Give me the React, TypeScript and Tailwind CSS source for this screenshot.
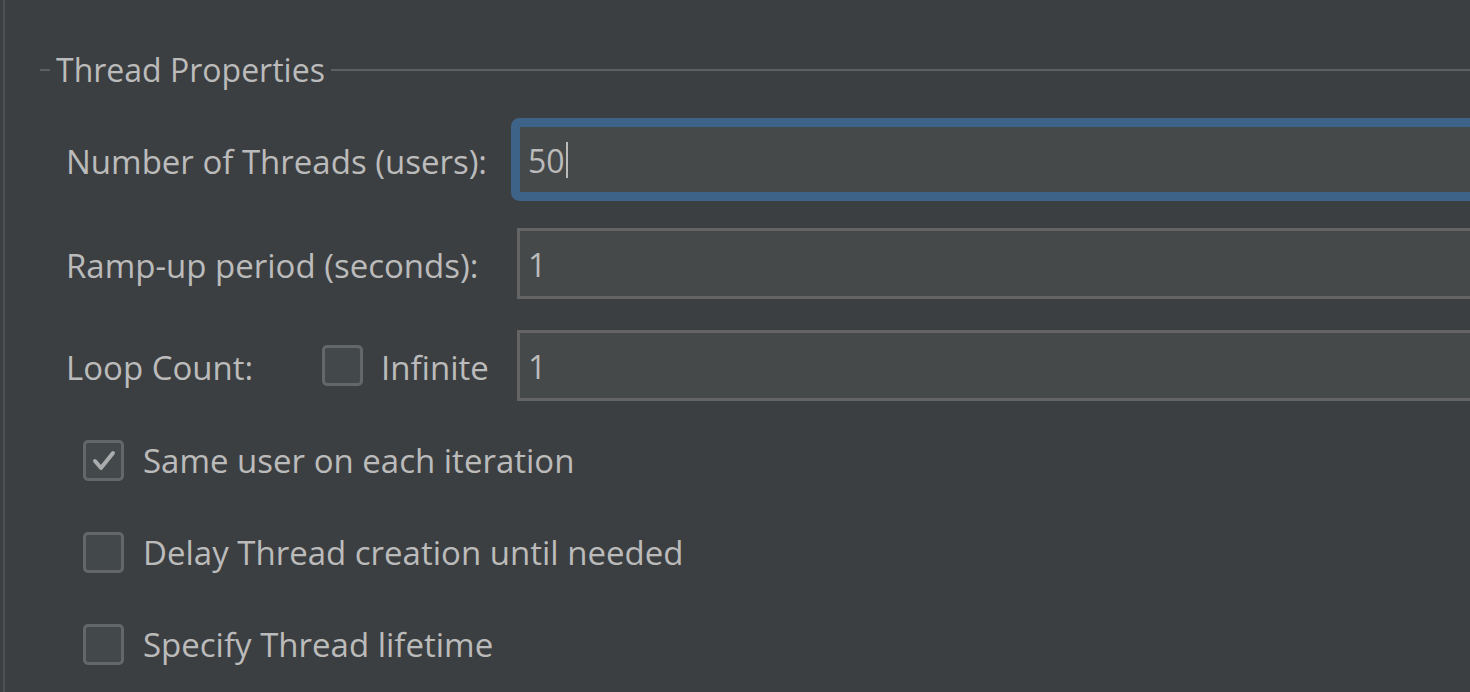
import React from "react";

const font = { fontFamily: '"Open Sans", "Noto Sans", sans-serif' };

function Box({ checked }: { checked?: boolean }) {
  return (
    <div className="w-[41px] h-[41px] shrink-0 rounded-[5px] border-[3px] border-[#646768] bg-[#43494a] flex items-center justify-center">
      {checked && (
        <svg width="26" height="24" viewBox="0 0 26 24">
          <path d="M4 12 L10 19 L22 4" fill="none" stroke="#a9abad" strokeWidth="4" strokeLinecap="round" strokeLinejoin="round" />
        </svg>
      )}
    </div>
  );
}

function Field({ value, focused }: { value: string; focused?: boolean }) {
  return (
    <div
      className={
        "flex-1 -mr-[30px] h-[71px] flex items-center pl-[8px] bg-[#45494a] border-[3px] " +
        (focused
          ? "border-[#3d6388] rounded-[3px] shadow-[0_0_0_6px_#3d6388]"
          : "border-[#646464]")
      }
    >
      <span className="text-[32px] text-[#bbbbbb] leading-none pt-[3px]">{value}</span>
      {focused && <span className="ml-[1px] w-[2px] h-[36px] bg-[#bbbbbb]" />}
    </div>
  );
}

export default function App() {
  return (
    <div className="w-[1470px] h-[692px] overflow-hidden bg-[#3c3f41] pl-[3px]" style={font}>
      <div className="h-full border-l-[2px] border-[#4e5153] text-[#bbbbbb] text-[33px]">
        <div className="h-[140px] pt-[50px]">
          <div className="h-[40px] flex items-center">
            <div className="ml-[35px] w-[10px] h-[2px] bg-[#5d6062]" />
            <span className="ml-[6px] leading-none text-[32px]">Thread Properties</span>
            <div className="ml-[6px] flex-1 h-[2px] bg-[#5d6062]" />
          </div>
        </div>
        <div className="flex flex-col pl-[61px]">
          <div className="h-[71px] mt-[-16px] flex items-center">
            <span className="w-[451px] shrink-0 leading-none pt-[4px]">Number of Threads (users):</span>
            <Field value="50" focused />
          </div>
          <div className="h-[71px] mt-[33px] flex items-center">
            <span className="w-[451px] shrink-0 leading-none pt-[4px]">Ramp-up period (seconds):</span>
            <Field value="1" />
          </div>
          <div className="h-[71px] mt-[31px] flex items-center">
            <span className="w-[256px] shrink-0 leading-none pt-[4px]">Loop Count:</span>
            <Box />
            <span className="w-[154px] shrink-0 pl-[18px] leading-none pt-[4px]">Infinite</span>
            <Field value="1" />
          </div>
          <div className="flex flex-col pl-[17px] mt-[39px] gap-[51px]">
            <div className="flex items-center gap-[19px]">
              <Box checked />
              <span className="leading-none">Same user on each iteration</span>
            </div>
            <div className="flex items-center gap-[19px]">
              <Box />
              <span className="leading-none">Delay Thread creation until needed</span>
            </div>
            <div className="flex items-center gap-[19px]">
              <Box />
              <span className="leading-none">Specify Thread lifetime</span>
            </div>
          </div>
        </div>
      </div>
    </div>
  );
}
